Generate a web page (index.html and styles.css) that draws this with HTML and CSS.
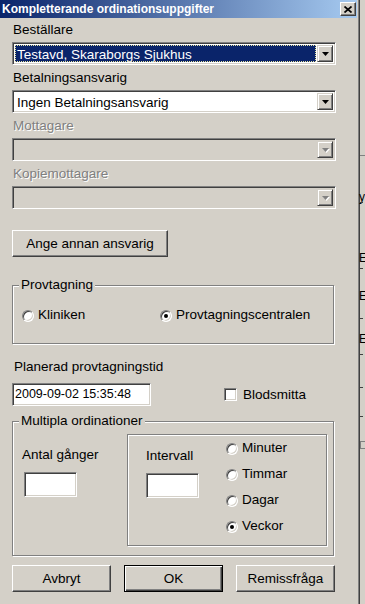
FILE: index.html
```html
<!DOCTYPE html>
<html lang="sv">
<head>
    <meta charset="UTF-8">
    <meta name="viewport" content="width=device-width, initial-scale=1.0">
    <title>Kompletterande ordinationsuppgifter</title>
    <link rel="stylesheet" href="styles.css">
</head>
<body>

    <div class="screen">
        <div class="dialog">
            <div class="titlebar">
                <span class="title">Kompletterande ordinationsuppgifter</span>
                <span class="close">
                    <svg width="8" height="7" viewBox="0 0 8 7"><path d="M0.5 0.5L7.5 6.5M7.5 0.5L0.5 6.5" stroke="#000" stroke-width="1.7" fill="none"/></svg>
                </span>
            </div>

            <div class="content">
                <div class="label">Beställare</div>
                <div class="combo">
                    <span class="combo-text selected">Testavd, Skaraborgs Sjukhus</span>
                    <span class="drop"><svg class="arrow" width="7" height="4" viewBox="0 0 7 4"><path d="M0 0h7l-3.5 4z"/></svg></span>
                </div>

                <div class="label">Betalningsansvarig</div>
                <div class="combo">
                    <span class="combo-text">Ingen Betalningsansvarig</span>
                    <span class="drop"><svg class="arrow" width="7" height="4" viewBox="0 0 7 4"><path d="M0 0h7l-3.5 4z"/></svg></span>
                </div>

                <div class="label disabled">Mottagare</div>
                <div class="combo combo-disabled">
                    <span class="combo-text"></span>
                    <span class="drop"><svg class="arrow" width="7" height="4" viewBox="0 0 7 4"><path d="M0 0h7l-3.5 4z"/></svg></span>
                </div>

                <div class="label disabled">Kopiemottagare</div>
                <div class="combo combo-disabled">
                    <span class="combo-text"></span>
                    <span class="drop"><svg class="arrow" width="7" height="4" viewBox="0 0 7 4"><path d="M0 0h7l-3.5 4z"/></svg></span>
                </div>

                <button class="btn btn-other">Ange annan ansvarig</button>

                <div class="group group-prov">
                    <div class="group-title">Provtagning</div>
                    <div class="prov-row">
                        <label class="option option-klinik"><span class="radio"></span>Kliniken</label>
                        <label class="option"><span class="radio checked"></span>Provtagningscentralen</label>
                    </div>
                </div>

                <div class="label label-plan">Planerad provtagningstid</div>
                <div class="time-row">
                    <div class="field field-date">2009-09-02 15:35:48</div>
                    <label class="option option-check"><span class="check"></span>Blodsmitta</label>
                </div>

                <div class="group group-multi">
                    <div class="group-title">Multipla ordinationer</div>
                    <div class="multi-body">
                        <div class="count-col">
                            <div>Antal gånger</div>
                            <div class="field field-small"></div>
                        </div>
                        <div class="interval-box">
                            <div class="interval-col">
                                <div>Intervall</div>
                                <div class="field field-small"></div>
                            </div>
                            <div class="unit-list">
                                <label class="option"><span class="radio"></span>Minuter</label>
                                <label class="option"><span class="radio"></span>Timmar</label>
                                <label class="option"><span class="radio"></span>Dagar</label>
                                <label class="option"><span class="radio checked"></span>Veckor</label>
                            </div>
                        </div>
                    </div>
                </div>

                <div class="actions">
                    <button class="btn">Avbryt</button>
                    <button class="btn btn-default">OK</button>
                    <button class="btn">Remissfråga</button>
                </div>
            </div>
        </div>

        <div class="behind">
            <div class="tick tick-line" style="margin-top: 155px"></div>
            <div class="tick tick-char" style="margin-top: 36px">y</div>
            <div class="tick" style="margin-top: 0px"></div>
            <div class="tick tick-char" style="margin-top: 50px">E</div>
            <div class="tick" style="margin-top: 5px"></div>
            <div class="tick tick-char" style="margin-top: 22px">E</div>
            <div class="tick" style="margin-top: 17px"></div>
            <div class="tick tick-char" style="margin-top: 15px">E</div>
            <div class="tick" style="margin-top: 10px"></div>
            <div class="tick" style="margin-top: 32px"></div>
            <div class="tick" style="margin-top: 28px"></div>
            <div class="tick tick-box" style="margin-top: 24px"></div>
        </div>
    </div>

</body>
</html>
```

FILE: styles.css
```css
body {
    margin: 0;
    padding: 0;
    background-color: #d4d0c8;
    font-family: "Liberation Sans", Arial, sans-serif;
    font-size: 13.5px;
    color: #000;
}
.screen {
    display: flex;
    height: 604px;
    overflow: hidden;
}
.dialog {
    width: 360px;
    flex-shrink: 0;
    box-sizing: border-box;
    border-right: 1px solid #404040;
    box-shadow: inset -1px 0 0 #808080;
}
.titlebar {
    display: flex;
    align-items: center;
    justify-content: space-between;
    width: 357px;
    height: 18px;
    box-sizing: border-box;
    padding: 0 1px 0 2px;
    background: linear-gradient(to right, #0a246a, #a6caf0);
}
.title {
    color: #fff;
    font-weight: bold;
    font-size: 12px;
}
.close {
    display: flex;
    align-items: center;
    justify-content: center;
    width: 16px;
    height: 14px;
    box-sizing: border-box;
    background-color: #d4d0c8;
    border: 1px solid;
    border-color: #fff #404040 #404040 #fff;
    box-shadow: inset -1px -1px 0 #808080;
}
.content {
    display: flex;
    flex-direction: column;
    align-items: flex-start;
    padding: 4px 0 0 12px;
}
.label {
    line-height: 16px;
    padding-left: 1px;
    margin-top: 5px;
}
.label:first-child {
    margin-top: 0;
}
.disabled {
    color: #808080;
    text-shadow: 1px 1px 0 #fff;
}
.combo {
    display: flex;
    width: 324px;
    height: 23px;
    margin-top: 4px;
    box-sizing: border-box;
    padding: 2px;
    background-color: #fff;
    border: 1px solid;
    border-color: #808080 #fff #fff #808080;
    box-shadow: inset 1px 1px 0 #404040, inset -1px -1px 0 #d4d0c8;
}
.combo-disabled {
    background-color: #d4d0c8;
}
.combo-text {
    flex: 1;
    margin-right: 1px;
    padding-left: 2px;
    line-height: 19px;
    white-space: nowrap;
}
.selected {
    background-color: #0a246a;
    color: #fff;
    outline: 1px dotted #e8e4a0;
    outline-offset: -1px;
}
.drop {
    display: flex;
    align-items: center;
    justify-content: center;
    width: 16px;
    box-sizing: border-box;
    padding-top: 1px;
    background-color: #d4d0c8;
    border: 1px solid;
    border-color: #d4d0c8 #404040 #404040 #d4d0c8;
    box-shadow: inset 1px 1px 0 #fff, inset -1px -1px 0 #808080;
}
.arrow path {
    fill: #000;
}
.combo-disabled .arrow path {
    fill: #808080;
}
.combo-disabled .arrow {
    filter: drop-shadow(1px 1px 0 #fff);
}
.btn {
    height: 27px;
    box-sizing: border-box;
    padding: 0;
    font: inherit;
    color: #000;
    background-color: #d4d0c8;
    border: 1px solid;
    border-color: #fff #404040 #404040 #fff;
    box-shadow: inset -1px -1px 0 #808080;
}
.btn-other {
    width: 156px;
    margin-top: 21px;
}
.btn-default {
    border-color: #000;
    box-shadow: inset 1px 1px 0 #fff, inset -1px -1px 0 #404040, inset -2px -2px 0 #808080;
}
.group {
    display: flex;
    flex-direction: column;
    align-items: flex-start;
    width: 322px;
    box-sizing: border-box;
    border: 1px solid #808080;
    box-shadow: inset 1px 1px 0 #fff, 1px 1px 0 #fff;
}
.group-title {
    margin: -9px 0 0 6px;
    padding: 0 2px;
    line-height: 16px;
    background-color: #d4d0c8;
}
.group-prov {
    margin-top: 28px;
    padding-bottom: 20px;
}
.prov-row {
    display: flex;
    margin-top: 14px;
    padding-left: 9px;
    line-height: 16px;
}
.option {
    display: flex;
    align-items: center;
    gap: 4px;
    line-height: 16px;
}
.option-klinik {
    width: 138px;
}
.radio {
    display: grid;
    place-items: center;
    width: 12px;
    height: 12px;
    margin-top: 2px;
    box-sizing: border-box;
    border-radius: 50%;
    background-color: #fff;
    border: 1px solid;
    border-color: #808080 #fff #fff #808080;
    box-shadow: inset 1px 1px 0 #404040, inset -1px -1px 0 #d4d0c8;
}
.radio.checked::after {
    content: "";
    width: 4px;
    height: 4px;
    border-radius: 50%;
    background-color: #000;
}
.check {
    width: 13px;
    height: 13px;
    box-sizing: border-box;
    background-color: #fff;
    border: 1px solid;
    border-color: #808080 #fff #fff #808080;
    box-shadow: inset 1px 1px 0 #404040, inset -1px -1px 0 #d4d0c8;
}
.option-check {
    gap: 6px;
    margin-left: 73px;
}
.label-plan {
    margin-top: 15px;
    padding-left: 2px;
}
.time-row {
    display: flex;
    align-items: center;
    margin-top: 8px;
}
.field {
    box-sizing: border-box;
    background-color: #fff;
    border: 1px solid;
    border-color: #808080 #fff #fff #808080;
    box-shadow: inset 1px 1px 0 #404040, inset -1px -1px 0 #d4d0c8;
}
.field-date {
    width: 139px;
    height: 23px;
    padding-left: 2px;
    font-size: 12.5px;
    line-height: 21px;
}
.field-small {
    width: 53px;
    height: 25px;
    margin-top: 9px;
}
.group-multi {
    margin-top: 15px;
    padding-bottom: 9px;
}
.multi-body {
    display: flex;
    margin-top: 5px;
}
.count-col {
    width: 114px;
    box-sizing: border-box;
    padding: 13px 0 0 9px;
    line-height: 16px;
}
.count-col .field-small {
    margin-left: 2px;
}
.interval-box {
    display: flex;
    width: 200px;
    height: 112px;
    box-sizing: border-box;
    padding: 5px 0 0 18px;
    border: 1px solid #808080;
    box-shadow: inset 1px 1px 0 #fff, 1px 1px 0 #fff;
}
.interval-col {
    width: 53px;
    padding-top: 8px;
    line-height: 16px;
}
.unit-list {
    display: flex;
    flex-direction: column;
    gap: 10px;
    margin-left: 27px;
}
.actions {
    display: flex;
    gap: 13px;
    margin-top: 9px;
}
.actions .btn {
    width: 99px;
}
.behind {
    flex: 1;
    display: flex;
    flex-direction: column;
    align-items: flex-start;
    background-color: #d4d0c8;
}
.tick {
    width: 3px;
    height: 1px;
    background-color: #404040;
}
.tick-line {
    width: 5px;
    background-color: #808080;
}
.tick-char {
    width: auto;
    height: 10px;
    background: none;
    font-size: 12px;
    line-height: 10px;
    margin-left: -1px;
}
.tick-box {
    width: 5px;
    height: 6px;
    background: none;
    border: 1px solid #808080;
}
```
